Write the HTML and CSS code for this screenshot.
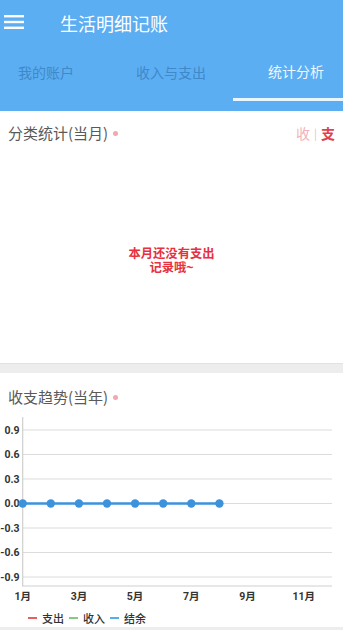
FILE: index.html
```html
<!DOCTYPE html>
<html lang="zh-CN">
<head>
<meta charset="utf-8">
<title>生活明细记账</title>
<link rel="stylesheet" href="styles.css">
</head>
<body>
<header class="appbar">
  <div class="toolbar">
    <svg class="menu" width="20" height="16" viewBox="0 0 20 16">
      <rect x="0" y="1" width="20" height="2.4" fill="#fff"/>
      <rect x="0" y="6.8" width="20" height="2.4" fill="#fff"/>
      <rect x="0" y="12.6" width="20" height="2.4" fill="#fff"/>
    </svg>
    <h1 class="title">生活明细记账</h1>
  </div>
  <nav class="tabs">
    <div class="tab tab-1">我的账户</div>
    <div class="tab tab-2">收入与支出</div>
    <div class="tab tab-3 active"><span>统计分析</span></div>
  </nav>
</header>

<section class="card card-category">
  <div class="card-head">
    <span class="card-title">分类统计(当月)</span>
    <span class="dot"></span>
    <span class="switch"><span class="sw-off">收</span><span class="sw-sep">|</span><span class="sw-on">支</span></span>
  </div>
  <div class="empty"><p class="empty-text"><span class="empty-line">本月还没有支出</span><span class="empty-line">记录哦~</span></p></div>
</section>

<div class="divider"></div>

<section class="card card-trend">
  <div class="card-head">
    <span class="card-title">收支趋势(当年)</span>
    <span class="dot"></span>
  </div>
  <svg class="chart" width="343" height="190" viewBox="0 0 343 190">
    <g stroke="#dcdcdc" stroke-width="1.2">
      <line x1="23" y1="15" x2="332" y2="15"/>
      <line x1="23" y1="39.5" x2="332" y2="39.5"/>
      <line x1="23" y1="64" x2="332" y2="64"/>
      <line x1="23" y1="88.5" x2="332" y2="88.5"/>
      <line x1="23" y1="113" x2="332" y2="113"/>
      <line x1="23" y1="137.5" x2="332" y2="137.5"/>
      <line x1="23" y1="162" x2="332" y2="162"/>
    </g>
    <line x1="22.7" y1="2" x2="22.7" y2="171" stroke="#cfcfcf" stroke-width="1.2"/>
    <line x1="22" y1="171" x2="332" y2="171" stroke="#cfcfcf" stroke-width="1.2"/>
    <g class="ylab" text-anchor="end">
      <text x="19.5" y="18.8">0.9</text>
      <text x="19.5" y="43.3">0.6</text>
      <text x="19.5" y="67.8">0.3</text>
      <text x="19.5" y="92.3">0.0</text>
      <text x="19.5" y="116.8">-0.3</text>
      <text x="19.5" y="141.3">-0.6</text>
      <text x="19.5" y="165.8">-0.9</text>
    </g>
    <g class="xlab" text-anchor="middle">
      <text x="22.7" y="185">1月</text>
      <text x="78.9" y="185">3月</text>
      <text x="135.1" y="185">5月</text>
      <text x="191.3" y="185">7月</text>
      <text x="247.5" y="185">9月</text>
      <text x="303.7" y="185">11月</text>
    </g>
    <polyline points="22.7,88.5 50.8,88.5 78.9,88.5 107,88.5 135.1,88.5 163.2,88.5 191.3,88.5 219.4,88.5" fill="none" stroke="#3d92dc" stroke-width="2.6"/>
    <g fill="#3d92dc">
      <circle cx="22.7" cy="88.5" r="4.2"/>
      <circle cx="50.8" cy="88.5" r="4.2"/>
      <circle cx="78.9" cy="88.5" r="4.2"/>
      <circle cx="107" cy="88.5" r="4.2"/>
      <circle cx="135.1" cy="88.5" r="4.2"/>
      <circle cx="163.2" cy="88.5" r="4.2"/>
      <circle cx="191.3" cy="88.5" r="4.2"/>
      <circle cx="219.4" cy="88.5" r="4.2"/>
    </g>
  </svg>
  <div class="legend">
    <span class="lg"><i class="sw sw-red"></i>支出</span>
    <span class="lg"><i class="sw sw-green"></i>收入</span>
    <span class="lg"><i class="sw sw-blue"></i>结余</span>
  </div>
</section>
<div class="bottom"></div>
</body>
</html>
```

FILE: styles.css
```css
* { box-sizing: border-box; }
html, body { margin: 0; padding: 0; }
body {
  width: 343px;
  height: 630px;
  overflow: hidden;
  background: #ffffff;
  font-family: "Noto Sans CJK SC", "Noto Sans", sans-serif;
}
.appbar {
  background: #5caef2;
  height: 111px;
  display: flex;
  flex-direction: column;
}
.toolbar {
  height: 45px;
  display: flex;
  align-items: center;
  padding-left: 4px;
}
.menu { display: block; margin-top: -1px; }
.title {
  margin: 0 0 0 36px;
  font-size: 18px;
  font-weight: 400;
  color: #ffffff;
  line-height: 24px;
}
.tabs {
  display: flex;
  height: 56px;
}
.tab {
  display: flex;
  align-items: center;
  font-size: 14px;
  color: #3f88c9;
  padding-bottom: 2px;
}
.tab-1 { width: 92px; justify-content: center; }
.tab-2 { width: 141px; justify-content: flex-start; padding-left: 44px; }
.tab-3 {
  width: 110px;
  justify-content: flex-start;
  padding-left: 35px;
  color: #eef7ff;
  border-bottom: 3.5px solid #eaf6ff;
}
.card { background: #ffffff; }
.card-category {
  height: 252px;
  display: flex;
  flex-direction: column;
}
.card-head {
  display: flex;
  align-items: center;
  padding: 12px 8px 12px 8px;
  height: 44px;
}
.card-title {
  font-size: 15px;
  line-height: 20px;
  color: #5a5a5a;
}
.dot {
  width: 5px;
  height: 5px;
  border-radius: 50%;
  background: #f3a7ae;
  margin-left: 5px;
}
.switch {
  margin-left: auto;
  font-size: 14px;
  line-height: 20px;
  display: flex;
  align-items: center;
}
.sw-off { color: #f1b2b9; }
.sw-sep { color: #f0b8be; font-size: 11px; margin: 0 4px; }
.sw-on { color: #e0414f; font-weight: 700; }
.empty {
  flex: 1;
  display: flex;
  align-items: center;
  justify-content: center;
  padding-top: 4px;
}
.empty-text {
  margin: 0;
  display: flex;
  flex-direction: column;
  align-items: center;
  font-family: "Liberation Sans", "Noto Sans CJK SC", sans-serif;
  font-size: 12.3px;
  font-weight: 700;
  color: #e8303e;
}
.empty-line {
  display: block;
  height: 14.5px;
  line-height: 14.5px;
}
.divider {
  height: 10px;
  background: #ededed;
  border-top: 1px solid #e2e2e2;
}
.card-trend .card-head {
  padding: 14px 8px 8px 8px;
  height: 42px;
}
.chart { display: block; }
.ylab text, .xlab text {
  font-family: "Roboto", "Noto Sans CJK SC", sans-serif;
  font-weight: 700;
  fill: #333333;
}
.ylab text { font-size: 10.5px; }
.xlab text { font-size: 10.5px; }
.legend {
  display: flex;
  align-items: center;
  height: 19px;
  margin-top: 3px;
  padding-left: 28px;
  font-size: 11px;
  font-weight: 500;
  color: #333333;
}
.lg { display: flex; align-items: center; margin-right: 5px; }
.sw {
  display: inline-block;
  width: 9px;
  height: 2px;
  margin-right: 5px;
}
.sw-red { background: #e66060; }
.sw-green { background: #86c886; }
.sw-blue { background: #58aee6; }
.bottom {
  height: 10px;
  background: #ededed;
}
```
